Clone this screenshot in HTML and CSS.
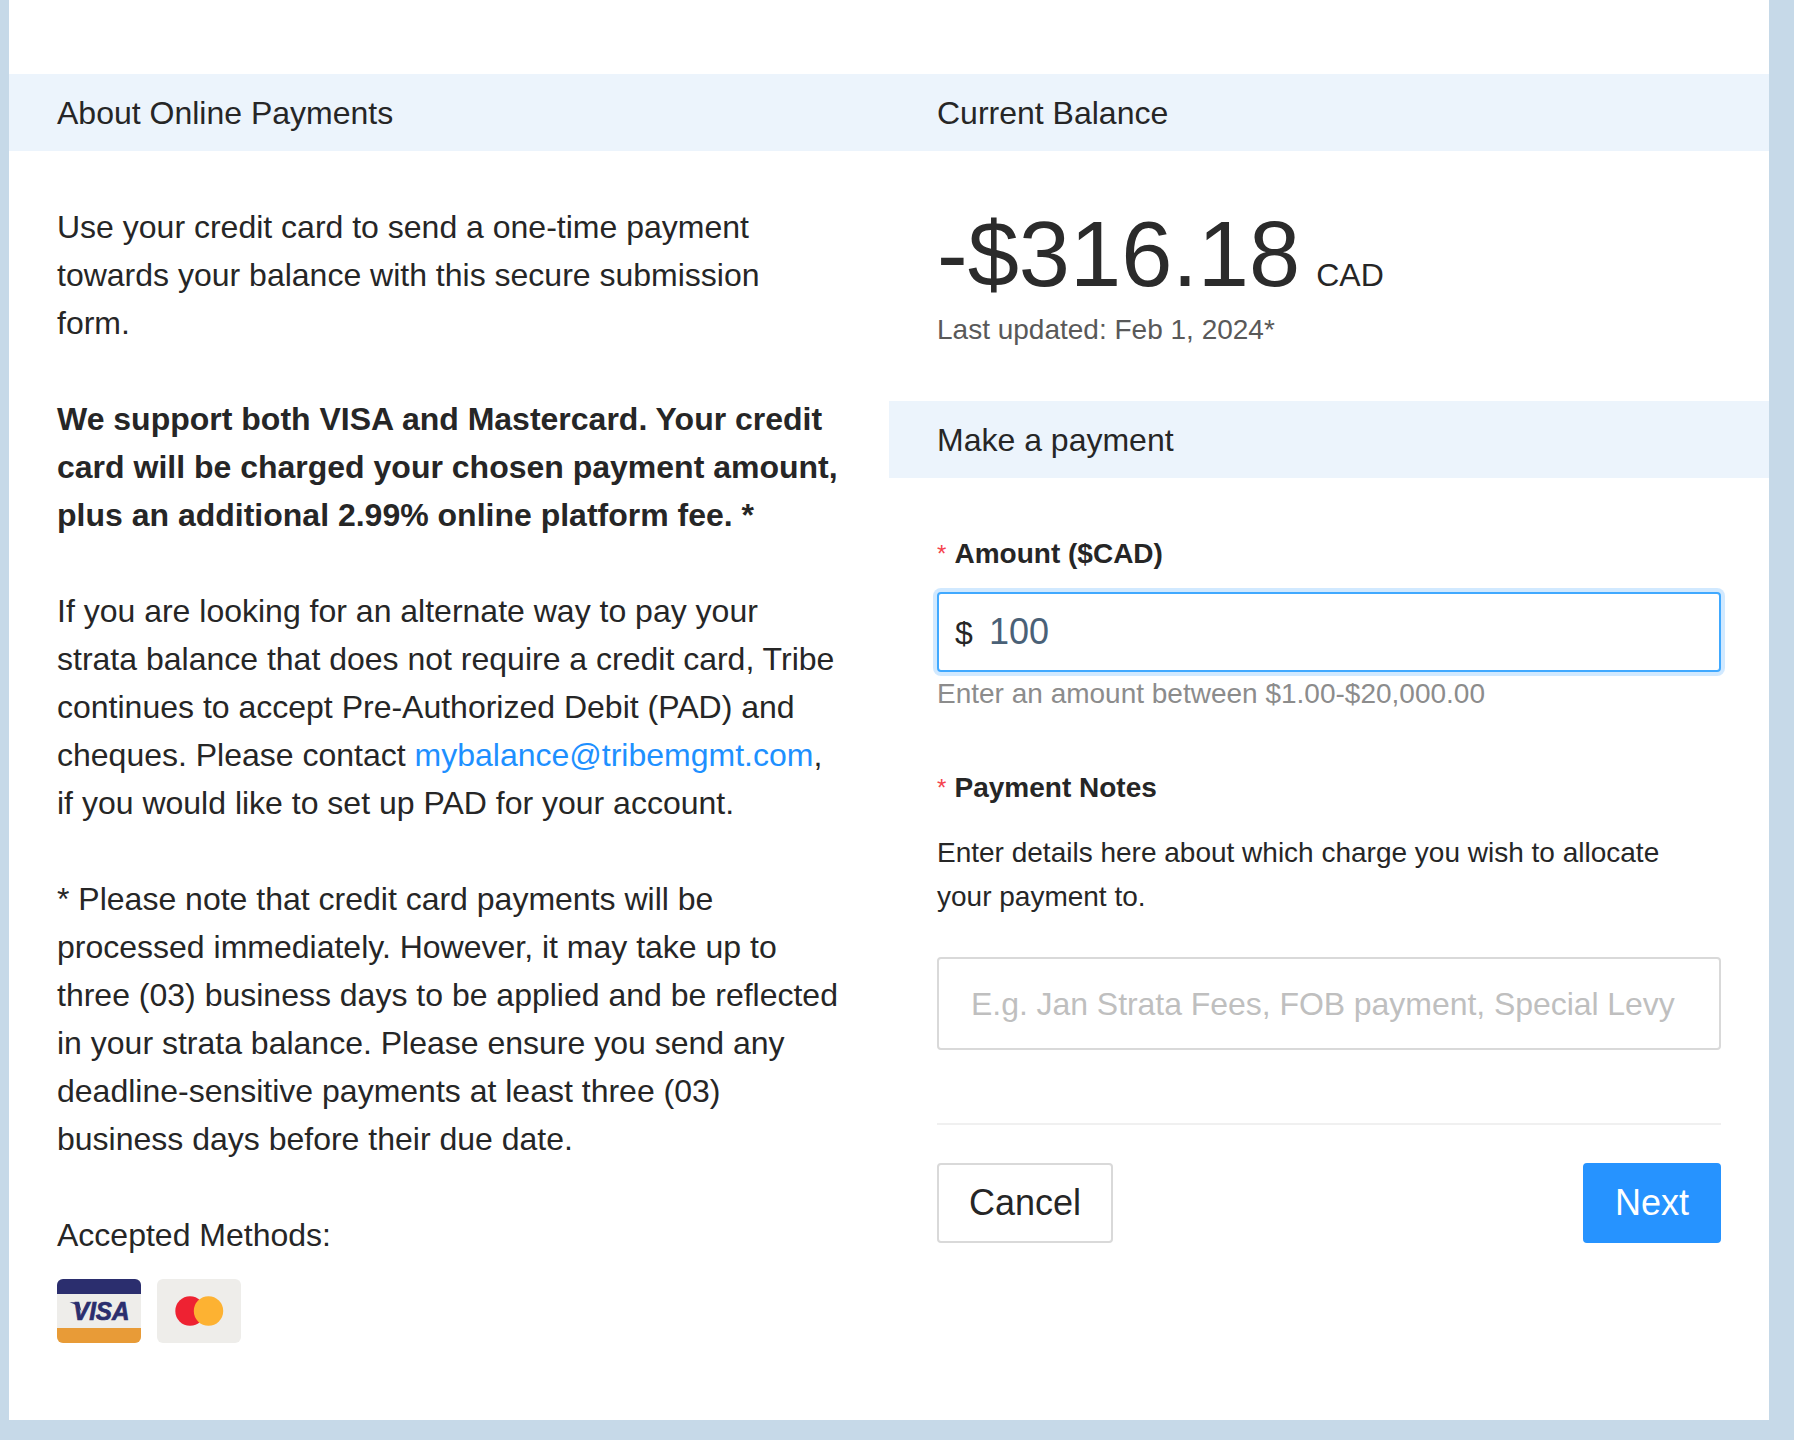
FILE: index.html
```html
<!DOCTYPE html>
<html lang="en">
<head>
<meta charset="utf-8">
<title>Online Payments</title>
<link rel="stylesheet" href="styles.css">
</head>
<body>
<main class="panel">
  <section class="col">
    <h2 class="band">About Online Payments</h2>
    <div class="copy">
      <p>Use your credit card to send a one-time payment towards your balance with this secure submission form.</p>
      <p><strong>We support both VISA and Mastercard. Your credit card will be charged your chosen payment amount, plus an additional 2.99% online platform fee. *</strong></p>
      <p>If you are looking for an alternate way to pay your strata balance that does not require a credit card, Tribe continues to accept Pre-Authorized Debit (PAD) and cheques. Please contact <a href="#">mybalance@tribemgmt.com</a>, if you would like to set up PAD for your account.</p>
      <p>* Please note that credit card payments will be processed immediately. However, it may take up to three (03) business days to be applied and be reflected in your strata balance. Please ensure you send any deadline-sensitive payments at least three (03) business days before their due date.</p>
      <div class="accepted">Accepted Methods:</div>
      <div class="cards">
        <svg class="card" viewBox="0 0 84 64" width="84" height="64" role="img" aria-label="Visa">
          <rect width="84" height="64" rx="6" fill="#eeedea"/>
          <path d="M0 15V6a6 6 0 0 1 6-6h72a6 6 0 0 1 6 6v9z" fill="#2b2e6e"/>
          <path d="M0 49h84v9a6 6 0 0 1-6 6H6a6 6 0 0 1-6-6z" fill="#e89b37"/>
          <path d="M12.5 23.3h9.5l2.6 9.7c-2-4.600-6.500-8-12.100-9.700z" fill="#2b2e6e"/>
          <text class="visa" x="16" y="41" textLength="56.500" lengthAdjust="spacingAndGlyphs">VISA</text>
        </svg>
        <svg class="card" viewBox="0 0 84 64" width="84" height="64" role="img" aria-label="Mastercard">
          <rect width="84" height="64" rx="6" fill="#eeedea"/>
          <circle cx="33" cy="32" r="14.700" fill="#ee2232"/>
          <circle cx="51.500" cy="32" r="14.700" fill="#fdb232"/>
        </svg>
      </div>
    </div>
  </section>
  <section class="col">
    <h2 class="band">Current Balance</h2>
    <div class="balance">
      <div class="amount"><span class="figure">-$316.18</span><span class="currency">CAD</span></div>
      <div class="updated">Last updated: Feb 1, 2024*</div>
    </div>
    <h2 class="band">Make a payment</h2>
    <form class="form">
      <div class="label"><span class="req">*</span>Amount ($CAD)</div>
      <div class="field field-focus"><span class="prefix">$</span><span class="value">100</span></div>
      <div class="hint">Enter an amount between $1.00-$20,000.00</div>
      <div class="label label-notes"><span class="req">*</span>Payment Notes</div>
      <div class="desc">Enter details here about which charge you wish to allocate your payment to.</div>
      <div class="field field-notes"><span class="placeholder">E.g. Jan Strata Fees, FOB payment, Special Levy</span></div>
      <div class="actions">
        <button class="btn" type="button">Cancel</button>
        <button class="btn btn-primary" type="button">Next</button>
      </div>
    </form>
  </section>
</main>
</body>
</html>
```
FILE: styles.css
```css
* { box-sizing: border-box; }
html, body { margin: 0; height: 1440px; }
body {
  background: #c6d9e8;
  padding: 0 25px 20px 9px;
  font-family: "Liberation Sans", Arial, Helvetica, sans-serif;
  color: #262626;
  font-size: 32px;
  line-height: 48px;
  overflow: hidden;
}
.panel {
  background: #fff;
  height: 1420px;
  padding-top: 74px;
  display: grid;
  grid-template-columns: 880px 880px;
}
.col { min-width: 0; }
.band {
  margin: 0;
  height: 77px;
  padding: 0 48px;
  display: flex;
  align-items: center;
  background: #ecf4fc;
  font-size: 32px;
  font-weight: 400;
}
.copy { padding: 52px 48px 0; }
.copy p { margin: 0 0 48px; }
.copy strong { font-weight: 700; }
.copy a { color: #1e90ff; text-decoration: none; }
.accepted { height: 48px; }
.cards { display: flex; gap: 16px; margin-top: 20px; }
.card { display: block; }
.visa { font: italic 700 25px "Liberation Sans", Arial, sans-serif; fill: #2b2e6e; stroke: #2b2e6e; stroke-width: .7px; }

.balance { padding: 46px 48px 0; height: 250px; }
.amount { display: flex; align-items: baseline; gap: 16px; height: 111px; line-height: 115px; }
.figure { font-size: 92px; color: #2b2b2b; }
.currency { font-size: 32px; }
.updated { font-size: 28px; line-height: 44px; color: #595959; }

.form { padding: 54px 48px 0; }
.label { font-size: 28px; font-weight: 700; line-height: 44px; display: flex; }
.req { color: #f5434d; font-weight: 400; font-size: 24px; width: 17.500px; }
.label-notes { margin-top: 50px; }
.field {
  width: 784px;
  border: 2px solid #d9d9d9;
  border-radius: 4px;
  background: #fff;
  display: flex;
}
.field-focus {
  height: 80px;
  margin-top: 16px;
  padding-left: 16px;
  line-height: 76px;
  align-items: baseline;
  border-color: #40a9ff;
  box-shadow: 0 0 0 4px rgba(24, 144, 255, .2);
}
.prefix { width: 34px; }
.value { color: #4a6177; font-size: 36px; }
.hint { font-size: 28px; line-height: 44px; color: #8c8c8c; }
.desc { font-size: 28px; line-height: 44px; margin-top: 21px; }
.field-notes { height: 93px; margin-top: 38px; padding-left: 32px; align-items: center; }
.placeholder { color: #bfbfbf; white-space: nowrap; letter-spacing: -.05px; }
.actions {
  margin-top: 73px;
  padding-top: 38px;
  border-top: 2px solid #f0f0f0;
  display: flex;
  justify-content: space-between;
}
.btn {
  height: 80px;
  width: 176px;
  border: 2px solid #d9d9d9;
  border-radius: 4px;
  background: #fff;
  color: #262626;
  font: inherit;
  font-size: 36px;
  padding: 0;
}
.btn-primary { width: 138px; background: #2693ff; border-color: #2693ff; color: #fff; }
```
